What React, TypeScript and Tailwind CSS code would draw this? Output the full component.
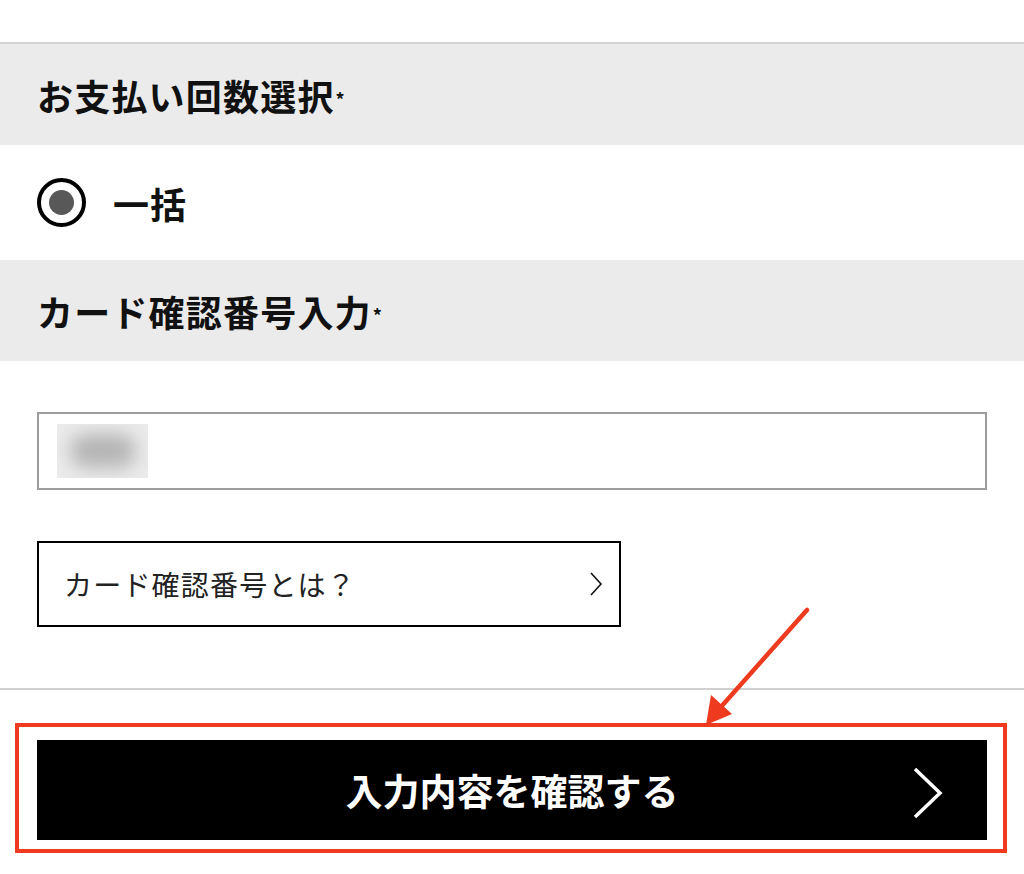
import React from 'react';

const FONT = { fontFamily: '"Noto Sans CJK JP", "Noto Sans", sans-serif' };

const SectionHeader: React.FC<{ label: string }> = ({ label }) => (
  <div className="h-[101px] bg-[#ebebeb] px-[37px] flex items-center">
    <h2 className="text-[36px] font-bold text-[#111] leading-none tracking-[1.2px]">
      {label}
      <span className="text-[18px] align-middle relative -top-[2px] ml-[1px]">*</span>
    </h2>
  </div>
);

const App: React.FC = () => {
  return (
    <div className="w-[1024px] h-[874px] bg-white overflow-hidden relative" style={FONT}>
      <div className="h-[42px]" />
      <div className="border-t-2 border-[#d4d4d4]">
        <SectionHeader label="お支払い回数選択" />

        <div className="h-[115px] px-[37px] flex items-center gap-[27px]">
          <div className="w-[49px] h-[49px] rounded-full border-[4px] border-black flex items-center justify-center">
            <div className="w-[25px] h-[25px] rounded-full bg-[#585858]" />
          </div>
          <span className="text-[36px] font-bold text-[#111] leading-none tracking-[1px]">一括</span>
        </div>

        <SectionHeader label="カード確認番号入力" />

        <div className="px-[37px] pt-[51px] pb-[61px]">
          <div className="h-[78px] border-2 border-[#9c9c9c] flex items-center pl-[18px]">
            <div className="w-[91px] h-[54px] bg-[#ebebeb] flex items-center justify-center overflow-hidden">
              <div className="w-[66px] h-[34px] bg-[#b5b5b5] blur-[9px] rounded-full" />
            </div>
          </div>

          <button className="mt-[51px] w-[584px] h-[86px] border-2 border-black flex items-center justify-between pl-[25px] pr-[16px]">
            <span className="text-[28px] text-[#222] tracking-[1.2px] leading-none">カード確認番号とは？</span>
            <svg width="14" height="26" viewBox="0 0 14 26" fill="none">
              <path d="M2 2 L12 13 L2 24" stroke="#111" strokeWidth="1.6" />
            </svg>
          </button>
        </div>

        <div className="border-t-2 border-[#d0d0d0]" />

        <div className="px-[37px] pt-[50px]">
          <div className="relative">
            <button className="w-full h-[100px] bg-black flex items-center justify-center relative">
              <span className="text-[37px] font-bold text-white leading-none">入力内容を確認する</span>
              <svg className="absolute right-[44px] top-[28px]" width="30" height="50" viewBox="0 0 30 50" fill="none">
                <path d="M2 1 L27 25 L2 49" stroke="#fff" strokeWidth="3.5" />
              </svg>
            </button>
            {/* annotation frame */}
            <div className="absolute -left-[22px] -top-[17px] -right-[20px] -bottom-[13px] border-[4px] border-[#ee3a1e] pointer-events-none" />
          </div>
        </div>
      </div>

      {/* annotation arrow */}
      <svg className="absolute left-0 top-0 pointer-events-none" width="1024" height="874" viewBox="0 0 1024 874">
        <line x1="807" y1="610" x2="720" y2="708" stroke="#ee3a1e" strokeWidth="4.5" strokeLinecap="round" />
        <polygon points="706,725 711,695 732,714" fill="#ee3a1e" />
      </svg>
    </div>
  );
};

export default App;
